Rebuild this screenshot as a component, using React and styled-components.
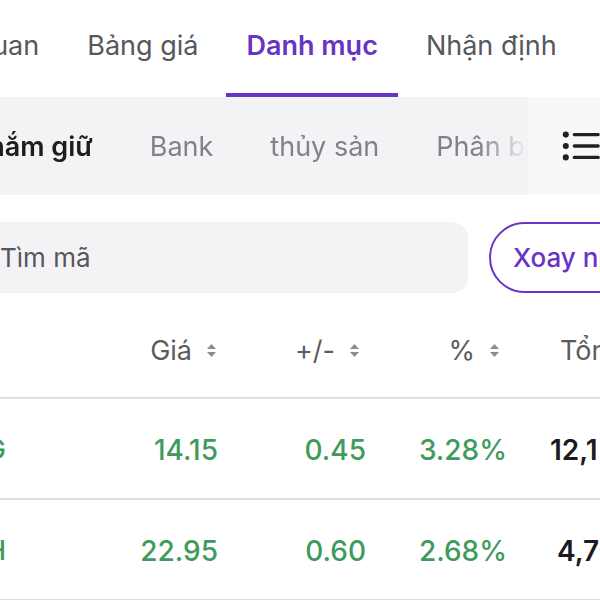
import React from "react";
import styled, { createGlobalStyle } from "styled-components";

const purple = "#6933c4";
const green = "#3f9b5d";

const GlobalStyle = createGlobalStyle`
  html, body {
    margin: 0;
    padding: 0;
    background: #fff;
  }
  body {
    font-family: Inter, "Noto Sans", sans-serif;
  }
`;

const tabs = ["Tổng quan", "Bảng giá", "Danh mục", "Nhận định", "Tin tức"];
const groups = ["Đang nắm giữ", "Bank", "thủy sản", "Phân bón"];
const rows = [
  { sym: "HAG", price: "14.15", chg: "0.45", pct: "3.28%", total: "12,1", pl: 43 },
  { sym: "DGH", price: "22.95", chg: "0.60", pct: "2.68%", total: "4,70", pl: 50 },
];

const SortIcon = () => (
  <svg width="11" height="15" viewBox="0 0 11 15">
    <path d="M5.5 1 L10 6 H1 Z" fill="#8a8c90" />
    <path d="M5.5 14 L10 9 H1 Z" fill="#8a8c90" />
  </svg>
);

const ListIcon = () => (
  <svg width="40" height="34" viewBox="0 0 40 34">
    <circle cx="4" cy="5" r="3.2" fill="#222" />
    <circle cx="4" cy="17" r="3.2" fill="#222" />
    <circle cx="4" cy="29" r="3.2" fill="#222" />
    <g stroke="#222" strokeWidth="3.6" strokeLinecap="round">
      <line x1="13" y1="5" x2="38" y2="5" />
      <line x1="13" y1="17" x2="38" y2="17" />
      <line x1="13" y1="29" x2="38" y2="29" />
    </g>
  </svg>
);

const App = () => {
  return (
    <Page>
      <GlobalStyle />
      <TabBar>
        {tabs.map((t) => (
          <Tab key={t} $active={t === "Danh mục"}>
            {t}
          </Tab>
        ))}
      </TabBar>

      <GroupBand>
        <GroupScroller>
          {groups.map((g, i) => (
            <Group key={g} $active={i === 0}>
              {g}
            </Group>
          ))}
        </GroupScroller>
        <MenuCell>
          <ListIcon />
        </MenuCell>
      </GroupBand>

      <SearchRow>
        <SearchBox>Tìm mã</SearchBox>
        <RotateButton>Xoay nhanh</RotateButton>
      </SearchRow>

      <HeaderRow>
        <span />
        <HeadCell $pr={1}>
          Giá <SortIcon />
        </HeadCell>
        <HeadCell $pr={6}>
          +/- <SortIcon />
        </HeadCell>
        <HeadCell $pr={7}>
          % <SortIcon />
        </HeadCell>
        <TotalHead>Tổng GT</TotalHead>
      </HeaderRow>

      {rows.map((r) => (
        <DataRow key={r.sym}>
          <Symbol>{r.sym}</Symbol>
          <Value>{r.price}</Value>
          <Value>{r.chg}</Value>
          <Value>{r.pct}</Value>
          <Total $pl={r.pl}>{r.total}</Total>
        </DataRow>
      ))}
    </Page>
  );
};

export default App;

const Page = styled.div`
  width: 600px;
  height: 600px;
  overflow: hidden;
  background: #fff;
`;

const TabBar = styled.div`
  display: flex;
  height: 97px;
  gap: 8px;
  margin-left: -116px;
  white-space: nowrap;
`;

const Tab = styled.div`
  display: flex;
  align-items: center;
  padding: 0 20px 2px;
  font-size: 27px;
  font-weight: ${(p) => (p.$active ? 600 : 400)};
  color: ${(p) => (p.$active ? purple : "#56585c")};
  border-bottom: 4px solid ${(p) => (p.$active ? purple : "transparent")};
  box-sizing: border-box;
  flex-shrink: 0;
`;

const GroupBand = styled.div`
  display: flex;
  height: 98px;
  background: #f3f3f6;
`;

const GroupScroller = styled.div`
  flex: 1;
  display: flex;
  align-items: center;
  gap: 57px;
  overflow: hidden;
  white-space: nowrap;
  margin-left: -87px;
  mask-image: linear-gradient(to right, #000 92%, transparent 100%);
`;

const Group = styled.div`
  flex-shrink: 0;
  font-size: 27px;
  font-weight: ${(p) => (p.$active ? 600 : 400)};
  color: ${(p) => (p.$active ? "#1d1d1f" : "#808288")};
`;

const MenuCell = styled.div`
  width: 72px;
  flex-shrink: 0;
  display: flex;
  align-items: center;
  padding-left: 34px;
  box-sizing: border-box;
  background: #f8f8fa;
`;

const SearchRow = styled.div`
  display: flex;
  gap: 21px;
  margin-top: 27px;
  height: 71px;
  margin-left: -30px;
`;

const SearchBox = styled.div`
  width: 498px;
  flex-shrink: 0;
  box-sizing: border-box;
  padding-left: 30px;
  display: flex;
  align-items: center;
  background: #f3f3f6;
  border-radius: 16px;
  font-size: 26px;
  color: #55575b;
`;

const RotateButton = styled.div`
  flex-shrink: 0;
  display: flex;
  align-items: center;
  padding: 0 22px;
  border: 2px solid ${purple};
  border-radius: 36px;
  font-size: 26px;
  font-weight: 500;
  color: ${purple};
  white-space: nowrap;
`;

const gridCols = "70px 208px 148px 141px 160px";

const HeaderRow = styled.div`
  display: grid;
  grid-template-columns: ${gridCols};
  align-items: center;
  height: 106px;
  box-sizing: border-box;
  padding-top: 10px;
  margin-left: -60px;
  border-bottom: 2px solid #dedede;
`;

const HeadCell = styled.div`
  display: flex;
  justify-content: flex-end;
  align-items: center;
  gap: 14px;
  padding-right: ${(p) => p.$pr}px;
  font-size: 27px;
  color: #5a5c60;
  white-space: nowrap;
`;

const TotalHead = styled.div`
  padding-left: 53px;
  font-size: 27px;
  color: #5a5c60;
  white-space: nowrap;
`;

const DataRow = styled.div`
  display: grid;
  grid-template-columns: ${gridCols};
  align-items: center;
  height: 101px;
  box-sizing: border-box;
  padding-top: 2px;
  margin-left: -60px;
  border-bottom: 2px solid #dedede;
`;

const Symbol = styled.div`
  font-size: 27px;
  font-weight: 500;
  color: ${green};
  text-align: right;
  padding-right: 4px;
  overflow: hidden;
`;

const Value = styled.div`
  text-align: right;
  font-size: 28px;
  font-weight: 500;
  color: ${green};
`;

const Total = styled.div`
  padding-left: ${(p) => p.$pl}px;
  font-size: 28px;
  font-weight: 600;
  color: #1b1b1d;
  white-space: nowrap;
`;
